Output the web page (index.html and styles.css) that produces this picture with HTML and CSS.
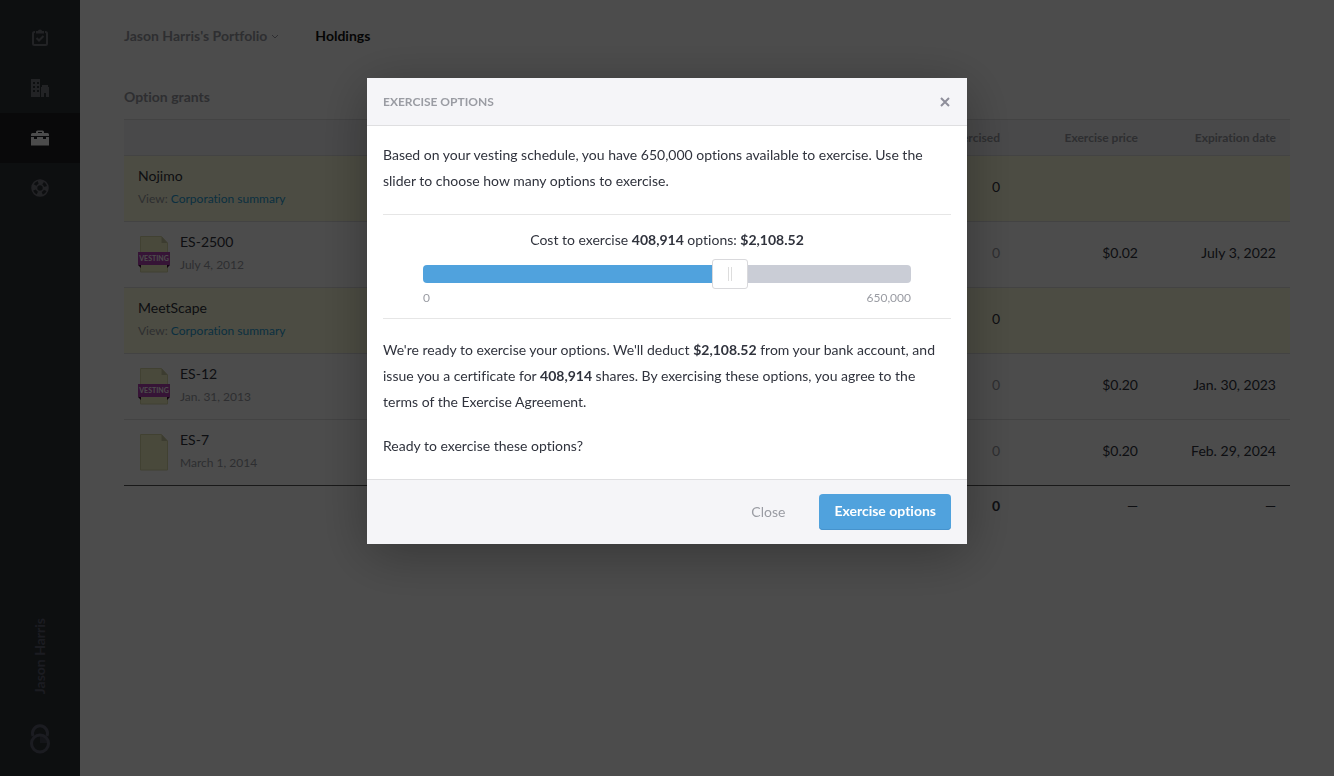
FILE: index.html
```html
<!DOCTYPE html>
<html lang="en">
<head>
  <meta charset="UTF-8">
  <meta name="viewport" content="width=device-width, initial-scale=1.0">
  <title>Holdings</title>
  <link rel="stylesheet" href="styles.css">
</head>
<body>
  <svg width="0" height="0" class="symbols" aria-hidden="true">
    <symbol id="cert" viewBox="0 0 32 37">
      <path d="M2.500.5h21l6 6.500v29h-27z" fill="#f5f5c6" stroke="#dadaa8"/>
      <path d="M23.500.5v6.500h6z" fill="#c9c9a2"/>
    </symbol>
    <symbol id="ribbon" viewBox="0 0 32 17">
      <path d="M0 13h3v3zM32 13h-3v3z" fill="#3f0838"/>
      <path d="M0 0h32v13H0z" fill="#b545b4"/>
    </symbol>
  </svg>

  <div class="app">
    <nav class="sidebar">
      <a href="#" aria-label="Tasks">
        <svg width="18" height="18" viewBox="0 0 18 18" fill="none" stroke="currentColor" stroke-width="2">
          <path d="M4 3H3.500Q2 3 2 4.500v10Q2 16 3.500 16h11q1.500 0 1.500-1.500v-10Q16 3 14.500 3H14"/>
          <path d="M5.500 9l2.500 2.500L12.500 7"/>
          <path d="M5 2h2q0-1.500 2-1.500T11 2h2v2.500H5z" fill="currentColor" stroke="none"/>
        </svg>
      </a>
      <a href="#" aria-label="Companies">
        <svg width="18" height="18" viewBox="0 0 18 18" fill="currentColor" fill-rule="evenodd">
          <path d="M0 0h9v18H0zM2 3v2h2V3zM6 3v2h2V3zM2 7v2h2V7zM6 7v2h2V7zM2 11v2h2v-2zM6 11v2h2v-2z"/>
          <path d="M10 8h1V6h6v2h1v10h-3v-4h-2v4h-3z"/>
        </svg>
      </a>
      <a href="#" class="active" aria-label="Portfolio">
        <svg width="18" height="16" viewBox="0 0 18 16" fill="currentColor" fill-rule="evenodd">
          <path d="M5 3V2q0-1.500 1.500-1.500h5Q13 .5 13 2v1h3.500Q18 3 18 4.500V6H0V4.500Q0 3 1.500 3zM7 3h4V2H7z"/>
          <path d="M0 7h3v2h3V7h6v2h3V7h3v8.500H0z"/>
        </svg>
      </a>
      <a href="#" aria-label="Help">
        <svg width="18" height="18" viewBox="0 0 18 18" fill="none" stroke="currentColor">
          <circle cx="9" cy="9" r="8" stroke-width="1.500"/>
          <circle cx="9" cy="9" r="3.500" stroke-width="1.500"/>
          <circle cx="9" cy="9" r="5.800" stroke-width="4" stroke-dasharray="5.110 4" stroke-dashoffset="2.555"/>
        </svg>
      </a>
      <div class="account">
        <span class="user">Jason Harris</span>
        <svg width="22" height="30" viewBox="0 0 22 30" fill="none" stroke="currentColor" stroke-width="3">
          <path d="M4 12A7.500 7.500 0 1 1 18 12"/>
          <circle cx="11" cy="19.500" r="8.500"/>
          <path d="M11 12a7.500 7.500 0 0 1 7.500 7H11z" fill="currentColor" fill-opacity=".5" stroke="none"/>
        </svg>
      </div>
    </nav>

    <main>
      <header class="topbar">
        <a href="#" class="portfolio">Jason Harris's Portfolio
          <svg width="8" height="5" viewBox="0 0 8 5" fill="none" stroke="currentColor"><path d="M1 1l3 3 3-3"/></svg>
        </a>
        <a href="#" class="current">Holdings</a>
      </header>

      <h2>Option grants</h2>
      <table class="grants">
        <thead>
          <tr>
            <th></th>
            <th class="num">Exercised</th>
            <th class="num">Exercise price</th>
            <th class="num">Expiration date</th>
          </tr>
        </thead>
        <tbody>
          <tr class="company">
            <td>
              <div class="name">Nojimo</div>
              <div class="sub">View: <a href="#">Corporation summary</a></div>
            </td>
            <td class="num">0</td>
            <td></td>
            <td></td>
          </tr>
          <tr>
            <td>
              <div class="grant">
                <div class="doc"><svg width="32" height="37"><use href="#cert"/></svg><span class="vesting"><svg width="32" height="17"><use href="#ribbon"/></svg><b>VESTING</b></span></div>
                <div>
                  <div class="name">ES-2500</div>
                  <div class="sub">July 4, 2012</div>
                </div>
              </div>
            </td>
            <td class="num muted">0</td>
            <td class="num">$0.02</td>
            <td class="num">July 3, 2022</td>
          </tr>
          <tr class="company">
            <td>
              <div class="name">MeetScape</div>
              <div class="sub">View: <a href="#">Corporation summary</a></div>
            </td>
            <td class="num">0</td>
            <td></td>
            <td></td>
          </tr>
          <tr>
            <td>
              <div class="grant">
                <div class="doc"><svg width="32" height="37"><use href="#cert"/></svg><span class="vesting"><svg width="32" height="17"><use href="#ribbon"/></svg><b>VESTING</b></span></div>
                <div>
                  <div class="name">ES-12</div>
                  <div class="sub">Jan. 31, 2013</div>
                </div>
              </div>
            </td>
            <td class="num muted">0</td>
            <td class="num">$0.20</td>
            <td class="num">Jan. 30, 2023</td>
          </tr>
          <tr>
            <td>
              <div class="grant">
                <div class="doc"><svg width="32" height="37"><use href="#cert"/></svg></div>
                <div>
                  <div class="name">ES-7</div>
                  <div class="sub">March 1, 2014</div>
                </div>
              </div>
            </td>
            <td class="num muted">0</td>
            <td class="num">$0.20</td>
            <td class="num">Feb. 29, 2024</td>
          </tr>
        </tbody>
        <tfoot>
          <tr>
            <td></td>
            <td class="num total">0</td>
            <td class="num">—</td>
            <td class="num">—</td>
          </tr>
        </tfoot>
      </table>
    </main>
  </div>

  <div class="overlay">
    <div class="modal" role="dialog" aria-labelledby="modal-title">
      <div class="modal-header">
        <h3 id="modal-title">EXERCISE OPTIONS</h3>
        <button type="button" class="dismiss" aria-label="Close">
          <svg width="12" height="12" viewBox="0 0 12 12" fill="none" stroke="currentColor" stroke-width="2"><path d="M2 2l8 8M10 2l-8 8"/></svg>
        </button>
      </div>
      <div class="modal-body">
        <p>Based on your vesting schedule, you have 650,000 options available to exercise. Use the slider to choose how many options to exercise.</p>
        <div class="chooser">
          <label for="amount">Cost to exercise <b>408,914</b> options: <b>$2,108.52</b></label>
          <div class="slider" style="--fill: 62.9%">
            <input type="range" id="amount" min="0" max="650000" value="408914">
          </div>
          <div class="limits"><span>0</span><span>650,000</span></div>
        </div>
        <p>We're ready to exercise your options. We'll deduct <b>$2,108.52</b> from your bank account, and issue you a certificate for <b>408,914</b> shares. By exercising these options, you agree to the terms of the Exercise Agreement.</p>
        <p>Ready to exercise these options?</p>
      </div>
      <div class="modal-footer">
        <button type="button" class="link">Close</button>
        <button type="button" class="primary">Exercise options</button>
      </div>
    </div>
  </div>
</body>
</html>
```
FILE: styles.css
```css
:root {
  --text: #30333d;
  --muted: #9a9ca3;
  --blue: #50a2dd;
  --line: #dfdfe1;
  --panel: #f5f5f8;
}
* {
  margin: 0;
  padding: 0;
  box-sizing: border-box;
}
body {
  font-family: Lato, "Open Sans", sans-serif;
  font-size: 14px;
  font-variant-ligatures: none;
  line-height: 22px;
  color: var(--text);
  background: #fff;
}
a {
  color: inherit;
  text-decoration: none;
}
svg {
  display: block;
}
button {
  font: inherit;
  border: none;
  background: none;
  cursor: pointer;
}
.symbols {
  position: absolute;
}
.app {
  display: flex;
  min-height: 100vh;
}

/* sidebar */
.sidebar {
  width: 80px;
  flex: none;
  display: flex;
  flex-direction: column;
  padding: 13px 0 22px;
  background: #2e3238;
  color: #73757d;
}
.sidebar a {
  display: flex;
  align-items: center;
  justify-content: center;
  height: 50px;
}
.sidebar a.active {
  background: #1e1f22;
  color: #fff;
}
.account {
  margin-top: auto;
  display: flex;
  flex-direction: column;
  align-items: center;
  gap: 30px;
  color: #5b5f70;
}
.user {
  writing-mode: vertical-rl;
  transform: rotate(180deg);
  font-weight: 700;
}

/* holdings */
main {
  flex: 1;
  padding: 25px 44px;
}
.topbar {
  display: flex;
  gap: 36px;
  font-weight: 700;
}
.portfolio {
  display: flex;
  align-items: center;
  gap: 4px;
  color: var(--muted);
}
.current {
  color: #111;
}
h2 {
  margin: 39px 0 11px;
  font-size: 14px;
  line-height: 22px;
  color: var(--muted);
}
.grants {
  width: 100%;
  table-layout: fixed;
  border-collapse: collapse;
}
.grants th {
  height: 36px;
  padding: 0 14px;
  font-size: 12px;
  color: var(--muted);
  background: var(--panel);
  border-top: 1px solid var(--line);
  border-bottom: 1px solid var(--line);
}
.grants td {
  height: 66px;
  padding: 0 14px 1px;
  border-bottom: 1px solid var(--line);
}
.grants .num {
  width: 138px;
  text-align: right;
}
.grants tbody .num {
  padding-bottom: 3px;
}
.grants .company {
  background: #ffffdf;
}
.grants tbody tr:last-child td {
  border-bottom-color: #555;
}
.grants tfoot td {
  height: 42px;
  border: none;
}
.total {
  font-weight: 700;
}
.muted {
  color: var(--muted);
}
.sub {
  font-size: 12px;
  line-height: 24px;
  color: var(--muted);
}
.sub a {
  color: #2a9fd8;
}
.grant {
  display: flex;
  align-items: center;
  gap: 10px;
}
.doc {
  position: relative;
}
.vesting {
  position: absolute;
  top: 16px;
  left: 0;
}
.vesting b {
  position: absolute;
  top: 0;
  width: 32px;
  font-size: 7px;
  line-height: 13px;
  text-align: center;
  color: #fff;
}

/* exercise dialog */
.overlay {
  position: fixed;
  inset: 0;
  padding: 78px 16px;
  overflow: auto;
  background: rgba(0, 0, 0, 0.7);
}
.modal {
  max-width: 600px;
  margin: 0 auto;
  background: #fff;
  box-shadow: 0 10px 50px rgba(0, 0, 0, 0.3);
}
.modal-header {
  display: flex;
  align-items: center;
  justify-content: space-between;
  height: 48px;
  padding: 0 16px;
  background: var(--panel);
  border-bottom: 1px solid var(--line);
}
.modal-header h3 {
  font-size: 12px;
  color: var(--muted);
}
.dismiss {
  color: #8f8f9b;
}
.modal-body {
  padding: 16px 16px 20px;
  line-height: 26px;
}
.modal-body p + p {
  margin-top: 18px;
}
.chooser {
  margin: 20px 0 18px;
  padding: 12px 40px 11px;
  border-top: 1px solid #e6e6e6;
  border-bottom: 1px solid #e6e6e6;
}
.chooser label {
  display: block;
  text-align: center;
}
.slider {
  height: 18px;
  margin: 12px 0 6px;
  border-radius: 4px;
  background: linear-gradient(to right, var(--blue) var(--fill), #cacdd6 var(--fill));
}
/* wider than the track, so the thumb can reach past both ends */
.slider input {
  display: block;
  appearance: none;
  width: calc(100% + 36px);
  height: 18px;
  margin: 0 -18px;
  background: none;
}
.slider input::-webkit-slider-thumb {
  appearance: none;
  width: 36px;
  height: 30px;
  border: 1px solid #d9d9dc;
  border-radius: 3px;
  background:
    linear-gradient(#ddd, #ddd) 15px 7px / 1px 14px no-repeat,
    linear-gradient(#ddd, #ddd) 18px 7px / 1px 14px no-repeat,
    #fff;
}
.limits {
  display: flex;
  justify-content: space-between;
  font-size: 12px;
  line-height: 18px;
  color: var(--muted);
}
.modal-footer {
  display: flex;
  align-items: center;
  justify-content: flex-end;
  gap: 34px;
  padding: 14px 16px;
  background: var(--panel);
  border-top: 1px solid var(--line);
}
.link {
  color: var(--muted);
}
.primary {
  height: 36px;
  padding: 0 15px 2px;
  border-radius: 4px;
  font-weight: 700;
  color: #fff;
  background: var(--blue);
  box-shadow: inset 0 -1px #4693cd;
}
```
